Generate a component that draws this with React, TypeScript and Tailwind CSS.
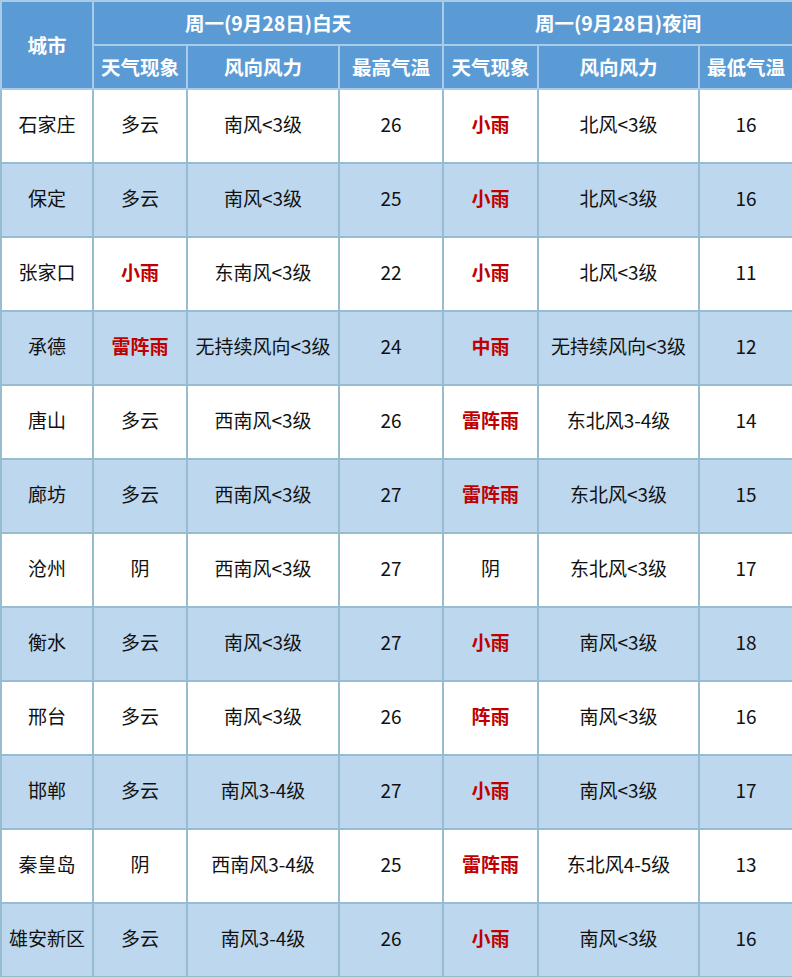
import React from "react";

type Row = [string, string, string, string, string, string, string];

const rows: Row[] = [
  ["石家庄", "多云", "南风<3级", "26", "小雨", "北风<3级", "16"],
  ["保定", "多云", "南风<3级", "25", "小雨", "北风<3级", "16"],
  ["张家口", "小雨", "东南风<3级", "22", "小雨", "北风<3级", "11"],
  ["承德", "雷阵雨", "无持续风向<3级", "24", "中雨", "无持续风向<3级", "12"],
  ["唐山", "多云", "西南风<3级", "26", "雷阵雨", "东北风3-4级", "14"],
  ["廊坊", "多云", "西南风<3级", "27", "雷阵雨", "东北风<3级", "15"],
  ["沧州", "阴", "西南风<3级", "27", "阴", "东北风<3级", "17"],
  ["衡水", "多云", "南风<3级", "27", "小雨", "南风<3级", "18"],
  ["邢台", "多云", "南风<3级", "26", "阵雨", "南风<3级", "16"],
  ["邯郸", "多云", "南风3-4级", "27", "小雨", "南风<3级", "17"],
  ["秦皇岛", "阴", "西南风3-4级", "25", "雷阵雨", "东北风4-5级", "13"],
  ["雄安新区", "多云", "南风3-4级", "26", "小雨", "南风<3级", "16"],
];

const isRain = (s: string) => s.includes("雨");

export default function App() {
  const hd =
    "border-2 border-[#a9cbe8] bg-[#5b9bd5] text-white font-bold text-[19.5px] text-center align-middle p-0";
  return (
    <div
      className="w-[792px] h-[977px] bg-white overflow-hidden"
      style={{ fontFamily: '"Noto Sans CJK SC", "Microsoft YaHei", sans-serif' }}
    >
      <table className="w-[792px] border-collapse table-fixed">
        <colgroup>
          <col className="w-[92px]" />
          <col className="w-[94px]" />
          <col className="w-[152px]" />
          <col className="w-[104px]" />
          <col className="w-[95px]" />
          <col className="w-[161px]" />
          <col className="w-[94px]" />
        </colgroup>
        <thead>
          <tr className="h-[44px]">
            <th rowSpan={2} className={hd}>城市</th>
            <th colSpan={3} className={hd}>周一(9月28日)白天</th>
            <th colSpan={3} className={hd}>周一(9月28日)夜间</th>
          </tr>
          <tr className="h-[44px]">
            <th className={hd}>天气现象</th>
            <th className={hd}>风向风力</th>
            <th className={hd}>最高气温</th>
            <th className={hd}>天气现象</th>
            <th className={hd}>风向风力</th>
            <th className={hd}>最低气温</th>
          </tr>
        </thead>
        <tbody>
          {rows.map((r, i) => (
            <tr
              key={i}
              className={i % 2 === 0 ? "h-[74px] bg-white" : "h-[74px] bg-[#bdd7ee]"}
            >
              {r.map((c, j) => {
                const red = (j === 1 || j === 4) && isRain(c);
                return (
                  <td
                    key={j}
                    className={
                      "border-2 border-[#98bccf] text-center align-middle px-0 pt-0 pb-[3px] text-[19px] whitespace-nowrap " +
                      (red ? "text-[#c00000] font-bold" : "text-[#111111]")
                    }
                  >
                    {c}
                  </td>
                );
              })}
            </tr>
          ))}
        </tbody>
      </table>
    </div>
  );
}
